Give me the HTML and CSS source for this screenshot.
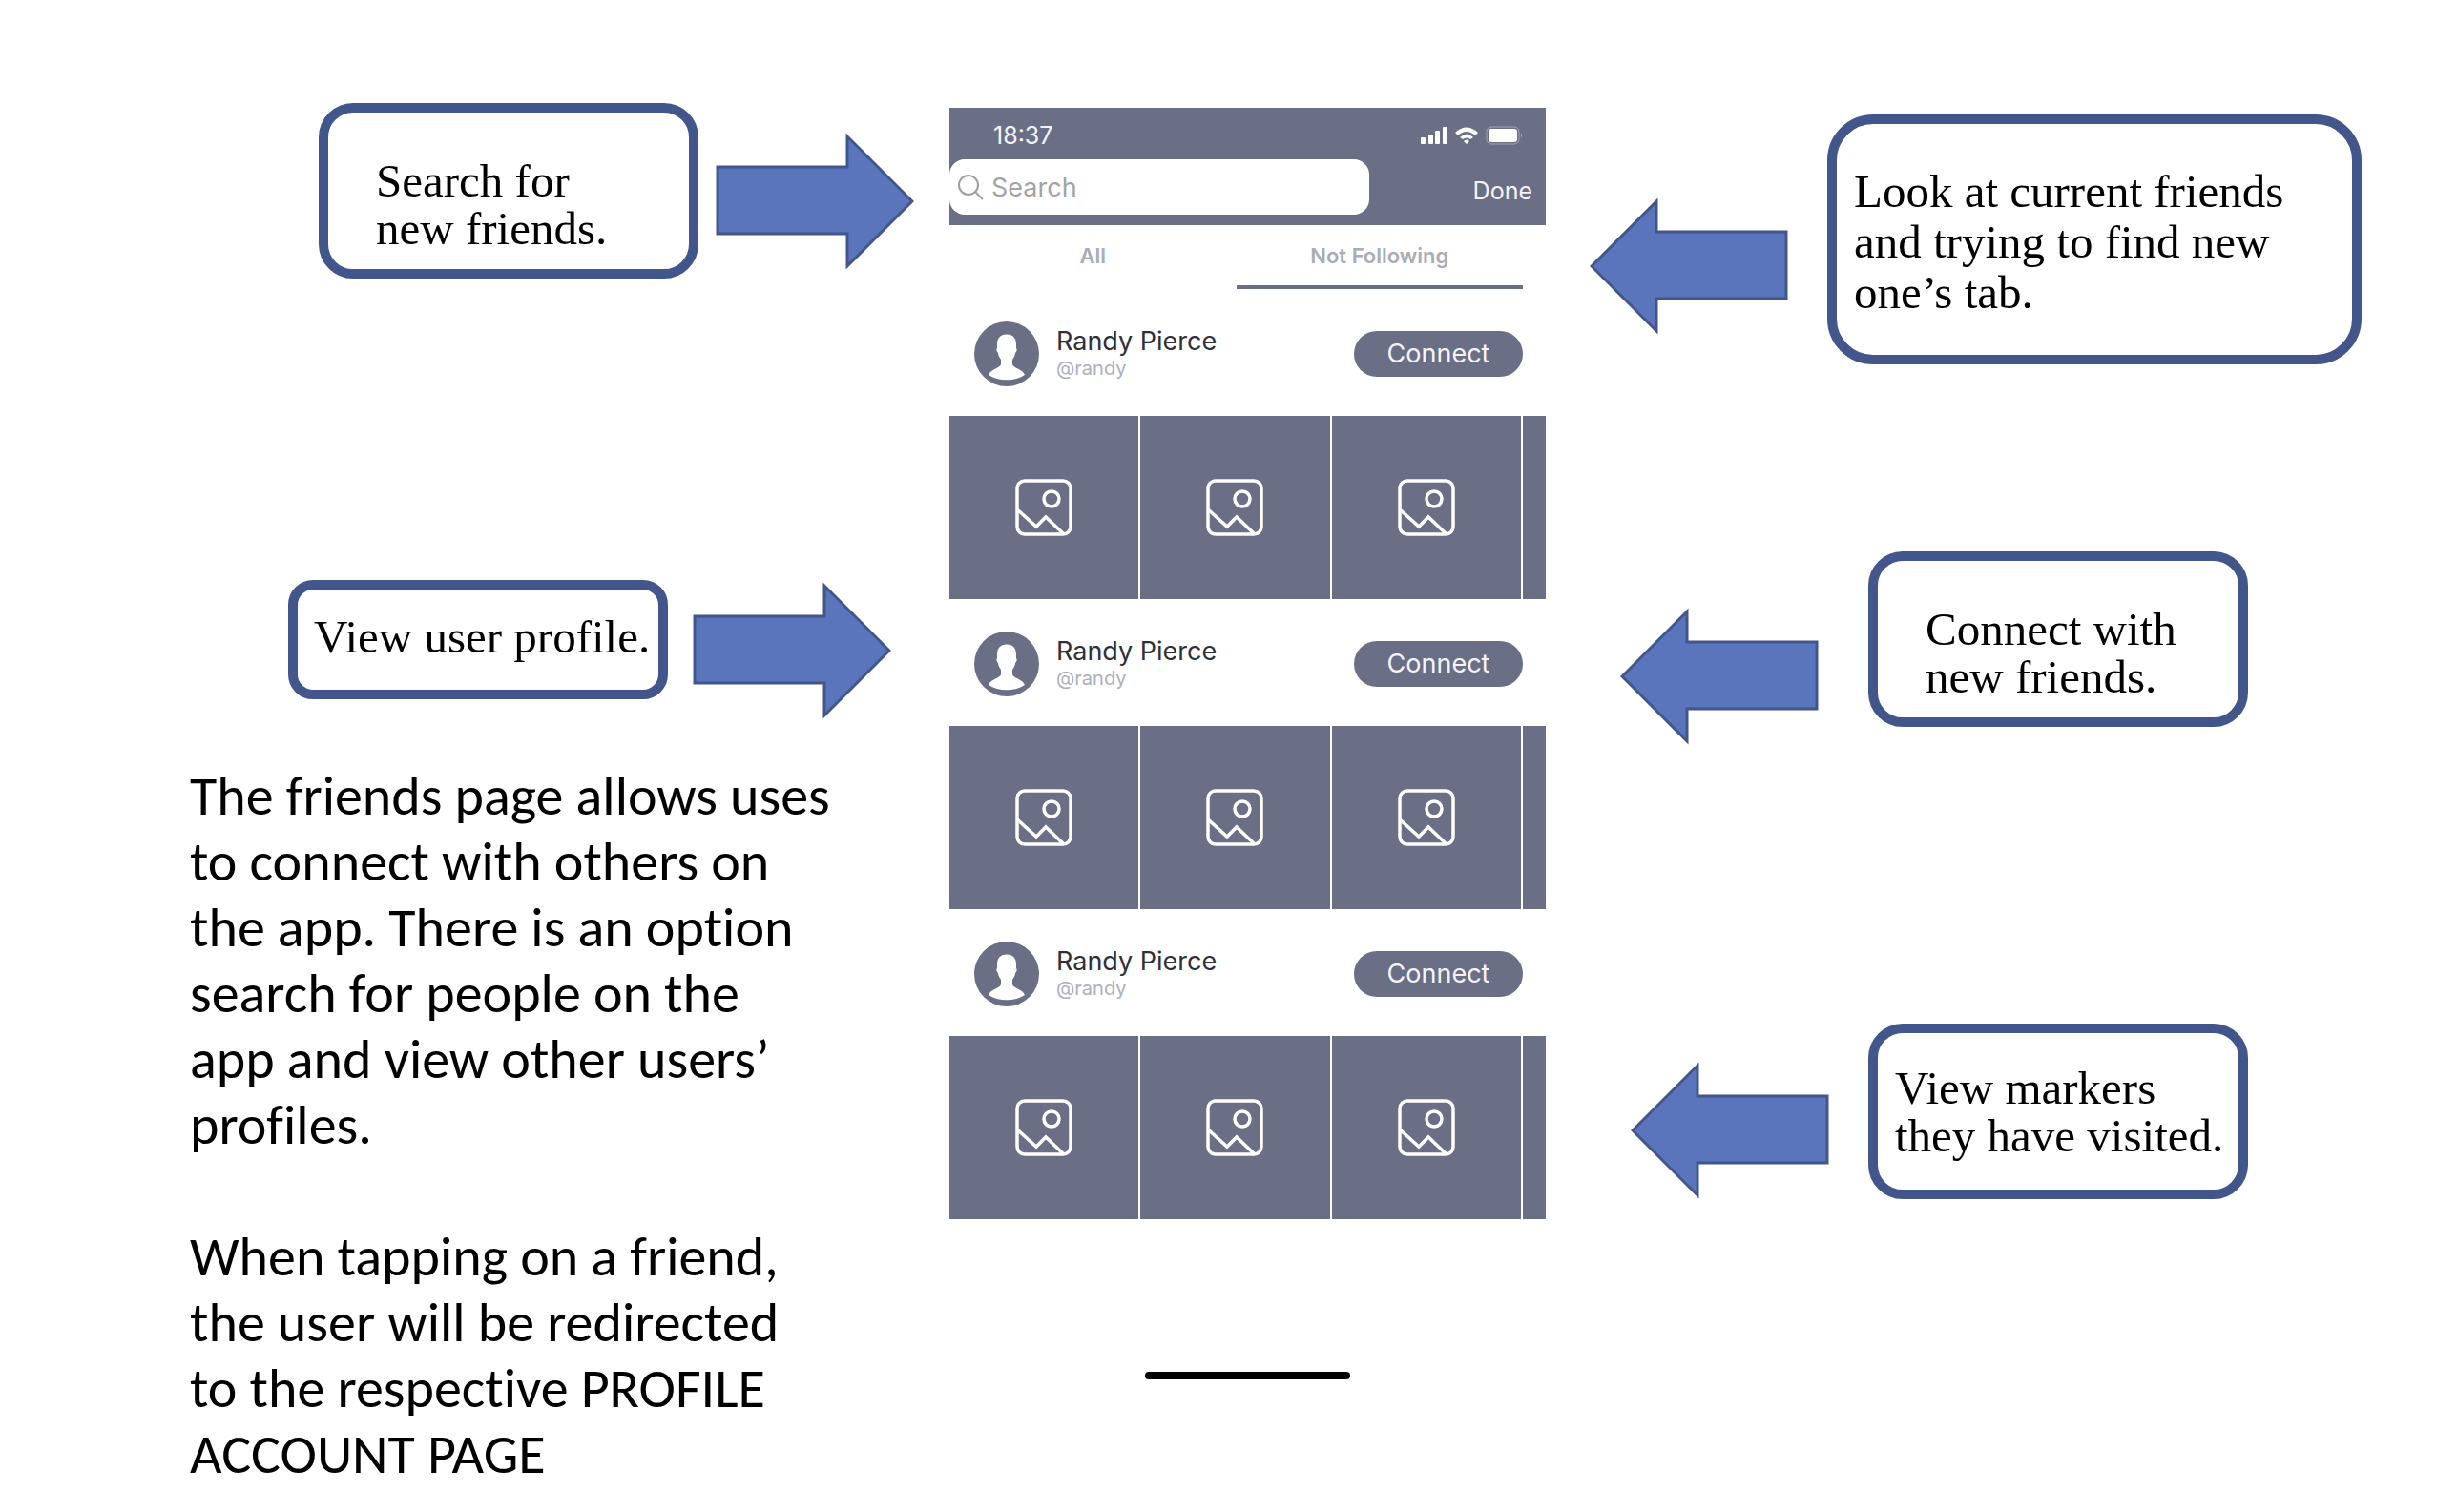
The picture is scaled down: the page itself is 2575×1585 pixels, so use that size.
FILE: index.html
```html
<!DOCTYPE html>
<html lang="en">
<head>
<meta charset="utf-8">
<meta name="viewport" content="width=device-width, initial-scale=1">
<title>Friends page</title>
<link rel="stylesheet" href="styles.css">
</head>
<body>
<svg class="sprite" aria-hidden="true">
  <symbol id="arrow" viewBox="0 0 208 144">
    <path d="M2 36H138V4L206 72L138 140V106H2Z" fill="#5b75bd" stroke="#42568c" stroke-width="3"/>
  </symbol>
  <symbol id="picture" viewBox="0 0 60 60">
    <g fill="none" stroke="#fff" stroke-width="3.500">
      <rect x="2" y="2" width="56" height="56" rx="8"/>
      <ellipse cx="38" cy="21" rx="8" ry="8"/>
      <path d="M2 32L22 50L32 40L51 58"/>
    </g>
  </symbol>
  <symbol id="person" viewBox="0 0 68 68">
    <circle cx="34" cy="34" r="34" fill="#6b6f86"/>
    <path d="M34 13.500C27 13.500 24 18 24 24V28C23 29 23 31 25 33C25 36 27 38 28 40V45C27 49 17 50 15 56C25 63 43 63 53 56C51 50 41 49 40 45V40C41 38 43 36 43 33C45 31 45 29 44 28V24C44 18 41 13.500 34 13.500Z" fill="#fff"/>
  </symbol>
</svg>

<main class="stage">
  <section class="side side-left">
    <div class="note note-search">
      <p class="callout">Search for<br>new friends.</p>
      <svg class="arrow"><use href="#arrow"/></svg>
    </div>
    <div class="note note-profile">
      <p class="callout">View user profile.</p>
      <svg class="arrow"><use href="#arrow"/></svg>
    </div>
    <div class="summary">
      <p>The friends page allows uses<br>to connect with others on<br>the app. There is an option<br>search for people on the<br>app and view other users’<br>profiles.</p>
      <p>When tapping on a friend,<br>the user will be redirected<br>to the respective PROFILE<br>ACCOUNT PAGE</p>
    </div>
  </section>

  <section class="phone">
    <header class="top">
      <div class="status">
        <span>18:37</span>
        <svg width="108" height="20" viewBox="0 0 108 20" fill="#fff" aria-hidden="true">
          <rect x="1" y="12" width="5" height="7" rx="1"/><rect x="9" y="9" width="5" height="10" rx="1"/><rect x="16" y="5" width="5" height="14" rx="1"/><rect x="24" y="1" width="5" height="18" rx="1"/>
          <path d="M37 7Q49 -4 61 7L58 10Q49 2 40 10ZM42 12Q49 5 56 12L53 14Q49 11 45 14ZM46 16Q49 13 52 16L49 19Z"/>
          <rect x="70" y="1" width="34" height="18" rx="5" fill="none" stroke="#a3a6b5"/>
          <rect x="72" y="3" width="30" height="14" rx="3"/>
          <path d="M106 7Q108 10 106 13Z" fill="#a3a6b5"/>
        </svg>
      </div>
      <div class="search-row">
        <label class="search">
          <svg width="28" height="28" viewBox="0 0 28 28" fill="none" stroke="#9d9da0" stroke-width="2" aria-hidden="true"><circle cx="12" cy="12" r="10"/><path d="M19 19L27 27"/></svg>
          <input type="search" placeholder="Search" aria-label="Search">
        </label>
        <button class="done" type="button">Done</button>
      </div>
    </header>
    <nav class="tabs">
      <button type="button">All</button>
      <button type="button" class="active">Not Following</button>
    </nav>

    <article>
      <div class="person">
        <svg class="avatar" aria-hidden="true"><use href="#person"/></svg>
        <div class="who"><strong>Randy Pierce</strong><span>@randy</span></div>
        <button class="connect" type="button">Connect</button>
      </div>
      <div class="tiles">
        <div><svg><use href="#picture"/></svg></div><div><svg><use href="#picture"/></svg></div><div><svg><use href="#picture"/></svg></div><div></div>
      </div>
    </article>
    <article>
      <div class="person">
        <svg class="avatar" aria-hidden="true"><use href="#person"/></svg>
        <div class="who"><strong>Randy Pierce</strong><span>@randy</span></div>
        <button class="connect" type="button">Connect</button>
      </div>
      <div class="tiles">
        <div><svg><use href="#picture"/></svg></div><div><svg><use href="#picture"/></svg></div><div><svg><use href="#picture"/></svg></div><div></div>
      </div>
    </article>
    <article>
      <div class="person">
        <svg class="avatar" aria-hidden="true"><use href="#person"/></svg>
        <div class="who"><strong>Randy Pierce</strong><span>@randy</span></div>
        <button class="connect" type="button">Connect</button>
      </div>
      <div class="tiles">
        <div><svg><use href="#picture"/></svg></div><div><svg><use href="#picture"/></svg></div><div><svg><use href="#picture"/></svg></div><div></div>
      </div>
    </article>
    <div class="home-bar"></div>
  </section>

  <section class="side side-right">
    <div class="note note-tabs">
      <svg class="arrow"><use href="#arrow"/></svg>
      <p class="callout">Look at current friends<br>and trying to find new<br>one’s tab.</p>
    </div>
    <div class="note note-connect">
      <svg class="arrow"><use href="#arrow"/></svg>
      <p class="callout">Connect with<br>new friends.</p>
    </div>
    <div class="note note-markers">
      <svg class="arrow"><use href="#arrow"/></svg>
      <p class="callout">View markers<br>they have visited.</p>
    </div>
  </section>
</main>
</body>
</html>
```

FILE: styles.css
```css
* { box-sizing: border-box; }

body {
  margin: 0;
  background: #fff;
  color: #000;
  font-family: Inter, "Liberation Sans", sans-serif;
}

p { margin: 0; }

button {
  border: 0;
  padding: 0;
  background: none;
  font-family: inherit;
}

.sprite { position: absolute; width: 0; height: 0; }

.stage {
  display: grid;
  grid-template-columns: 796fr 625fr 855fr;
  padding: 108px 100px 0 199px;
}

/* Annotations */
.side { display: flex; flex-direction: column; }

.note { display: flex; align-items: flex-start; }

.side-left .note { justify-content: flex-end; }

.arrow { flex: none; width: 208px; height: 144px; }

.side-right .arrow { transform: scaleX(-1); }

.callout {
  width: 398px;
  min-height: 184px;
  padding: 47px 0 17px 50px;
  border: 10px solid #42568c;
  border-radius: 36px;
  font-family: "Liberation Serif", serif;
  font-size: 49px;
  line-height: 50px;
  white-space: nowrap;
}

.note-search { gap: 18px; padding-right: 37px; }
.note-search .arrow { margin-top: 31px; }

.note-profile { gap: 26px; padding-right: 61px; margin-top: 316px; }
.note-profile .arrow { margin-top: 2px; }
.note-profile .callout {
  min-height: 125px;
  padding: 25px 0 23px 17px;
  border-radius: 26px;
}

.note-tabs { gap: 41px; padding: 12px 0 0 46px; }
.note-tabs .arrow { margin-top: 87px; }
.note-tabs .callout {
  flex: 1;
  min-height: 262px;
  padding: 44px 0 36px 18px;
  border-radius: 48px;
  line-height: 53px;
}

.note-connect { gap: 52px; padding-left: 78px; margin-top: 196px; }
.note-connect .arrow { margin-top: 59px; }

.note-markers { gap: 41px; padding-left: 89px; margin-top: 292px; }
.note-markers .arrow { margin-top: 40px; }
.note-markers .callout { padding: 33px 0 29px 18px; }

.summary {
  display: flex;
  flex-direction: column;
  gap: 69px;
  margin-top: 46px;
  font-family: Carlito, Lato, sans-serif;
  font-size: 58px;
  font-variant-ligatures: none;
  line-height: 69px;
  white-space: nowrap;
}

/* Phone */
.phone { padding-top: 5px; }

.top { padding-bottom: 11px; background: #6b6f86; color: #f4f4f8; }

.status {
  display: flex;
  align-items: center;
  justify-content: space-between;
  height: 54px;
  padding: 4px 24px 0 46px;
  font-size: 25px;
}

.search-row {
  display: flex;
  align-items: center;
  justify-content: space-between;
  padding-right: 14px;
}

.search {
  display: flex;
  align-items: center;
  gap: 8px;
  width: 72%;
  height: 58px;
  padding-left: 8px;
  border-radius: 16px;
  background: #fff;
}

.search input {
  flex: 1;
  min-width: 0;
  border: 0;
  padding: 0;
  outline: 0;
  background: none;
  font-family: inherit;
  font-size: 27px;
}

.search input::placeholder { color: #a3a3a5; opacity: 1; }

.done { padding-top: 8px; color: #f4f4f8; font-size: 25px; }

.tabs {
  display: grid;
  grid-template-columns: 1fr 1fr;
  height: 67px;
  padding-right: 24px;
}

.tabs button {
  border-bottom: 4px solid transparent;
  color: #a9abb6;
  font-size: 22px;
  font-weight: 600;
}

.tabs .active { border-color: #6b6f86; }

.person {
  display: flex;
  align-items: center;
  gap: 18px;
  height: 133px;
  padding: 2px 24px 0 26px;
}

.avatar { width: 68px; height: 68px; }

.who { display: flex; flex: 1; flex-direction: column; }

.who strong {
  color: #2e2f38;
  font-size: 27px;
  font-weight: 400;
  line-height: 30px;
}

.who span { color: #adafba; font-size: 20px; line-height: 26px; }

.connect {
  width: 177px;
  height: 48px;
  border-radius: 24px;
  background: #6b6f86;
  color: #f4f4f8;
  font-size: 27px;
}

.tiles {
  display: grid;
  grid-template-columns: 1fr 1fr 1fr 24px;
  gap: 2px;
  height: 192px;
}

.tiles div {
  display: flex;
  align-items: center;
  justify-content: center;
  background: #6b6f86;
}

.tiles svg { width: 60px; height: 60px; }

.home-bar {
  width: 215px;
  height: 8px;
  margin: 160px auto 0;
  border-radius: 4px;
  background: #000;
}
```
